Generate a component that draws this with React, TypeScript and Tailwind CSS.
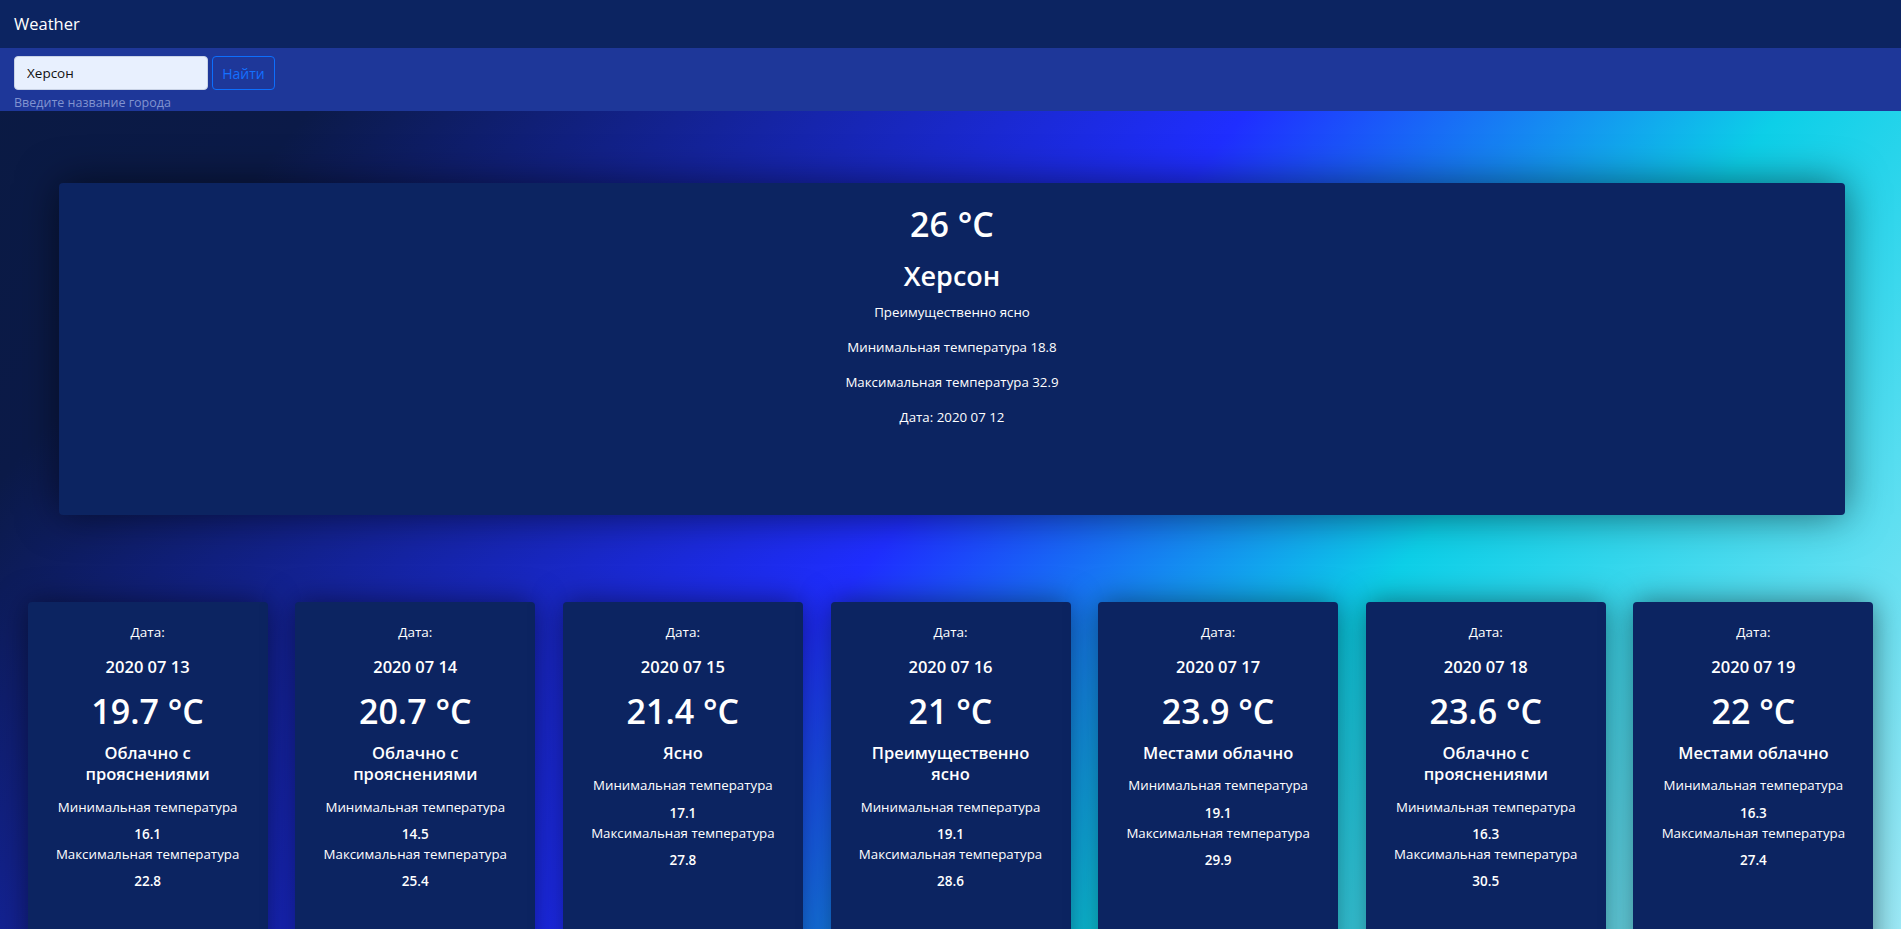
import React from "react";

type Day = {
  date: string;
  temp: string;
  desc: string;
  min: string;
  max: string;
};

const days: Day[] = [
  { date: "2020 07 13", temp: "19.7", desc: "Облачно с прояснениями", min: "16.1", max: "22.8" },
  { date: "2020 07 14", temp: "20.7", desc: "Облачно с прояснениями", min: "14.5", max: "25.4" },
  { date: "2020 07 15", temp: "21.4", desc: "Ясно", min: "17.1", max: "27.8" },
  { date: "2020 07 16", temp: "21", desc: "Преимущественно ясно", min: "19.1", max: "28.6" },
  { date: "2020 07 17", temp: "23.9", desc: "Местами облачно", min: "19.1", max: "29.9" },
  { date: "2020 07 18", temp: "23.6", desc: "Облачно с прояснениями", min: "16.3", max: "30.5" },
  { date: "2020 07 19", temp: "22", desc: "Местами облачно", min: "16.3", max: "27.4" },
];

function DayCard({ d }: { d: Day }) {
  return (
    <div className="w-[240px] h-[360px] shrink-0 rounded-[4px] bg-[#0c2461] shadow-[0_0_30px_rgba(0,0,0,0.5)] px-[22px] pt-[20px] text-center text-white">
      <p className="text-[13.5px] leading-[20px]">Дата:</p>
      <p className="mt-[13px] text-[16.5px] leading-[24px] font-semibold">{d.date}</p>
      <p className="mt-[10px] text-[34px] leading-[44px] font-semibold">{d.temp} °C</p>
      <p className="mt-[8.75px] text-[16.5px] leading-[21.5px] font-semibold">{d.desc}</p>
      <p className="mt-[11.75px] text-[13.3px] leading-[20px]">Минимальная температура</p>
      <p className="mt-[7.5px] text-[13.5px] leading-[20px] font-semibold">{d.min}</p>
      <p className="text-[13.3px] leading-[20px]">Максимальная температура</p>
      <p className="mt-[7px] text-[13.5px] leading-[20px] font-semibold">{d.max}</p>
    </div>
  );
}

export default function App() {
  return (
    <div
      className="relative h-screen w-full overflow-hidden bg-[linear-gradient(130deg,#0a1a42_0%,#0b1a48_15%,#1f2eff_50%,#0dcfe8_70%,#9eebf8_100%)] text-white"
      style={{ fontFamily: '"Open Sans", "Noto Sans", sans-serif' }}
    >
      <nav className="h-[48px] bg-[#0c2461] flex items-center px-[14px]">
        <span className="text-[16.5px] leading-none text-white">Weather</span>
      </nav>
      <div className="relative z-10 h-[63px] bg-[#1e3799] px-[14px] pt-[8px]">
        <form className="flex gap-[4px]" onSubmit={(e) => e.preventDefault()}>
          <input
            defaultValue="Херсон"
            className="w-[194px] h-[34px] rounded-[4px] border border-[#c9d3e6] bg-[#e8f0fe] px-[12px] text-[13.5px] text-[#111] outline-none"
          />
          <button
            type="submit"
            className="w-[63px] h-[34px] rounded-[4px] border border-[#0d6efd] bg-transparent text-[14px] text-[#1470ff]"
          >
            Найти
          </button>
        </form>
        <div className="mt-[3px] text-[12.5px] leading-[19px] text-[#8193d0]">Введите название города</div>
      </div>

      <main>
        <section className="ml-[59px] mr-[56px] mt-[72px] h-[332px] rounded-[4px] bg-[#0c2461] shadow-[0_0_40px_rgba(0,0,0,0.55)] pt-[19px] text-center text-white">
          <h1 className="text-[34px] leading-[44px] font-semibold">26 °C</h1>
          <h2 className="mt-[13px] text-[27px] leading-[34px] font-semibold">Херсон</h2>
          <p className="mt-[9px] text-[13.3px] leading-[21px]">Преимущественно ясно</p>
          <p className="mt-[14px] text-[13.3px] leading-[21px]">Минимальная температура 18.8</p>
          <p className="mt-[14px] text-[13.3px] leading-[21px]">Максимальная температура 32.9</p>
          <p className="mt-[14px] text-[13.3px] leading-[21px]">Дата: 2020 07 12</p>
        </section>

        <section className="mt-[87px] flex justify-evenly">
          {days.map((d) => (
            <DayCard key={d.date} d={d} />
          ))}
        </section>
      </main>
    </div>
  );
}
